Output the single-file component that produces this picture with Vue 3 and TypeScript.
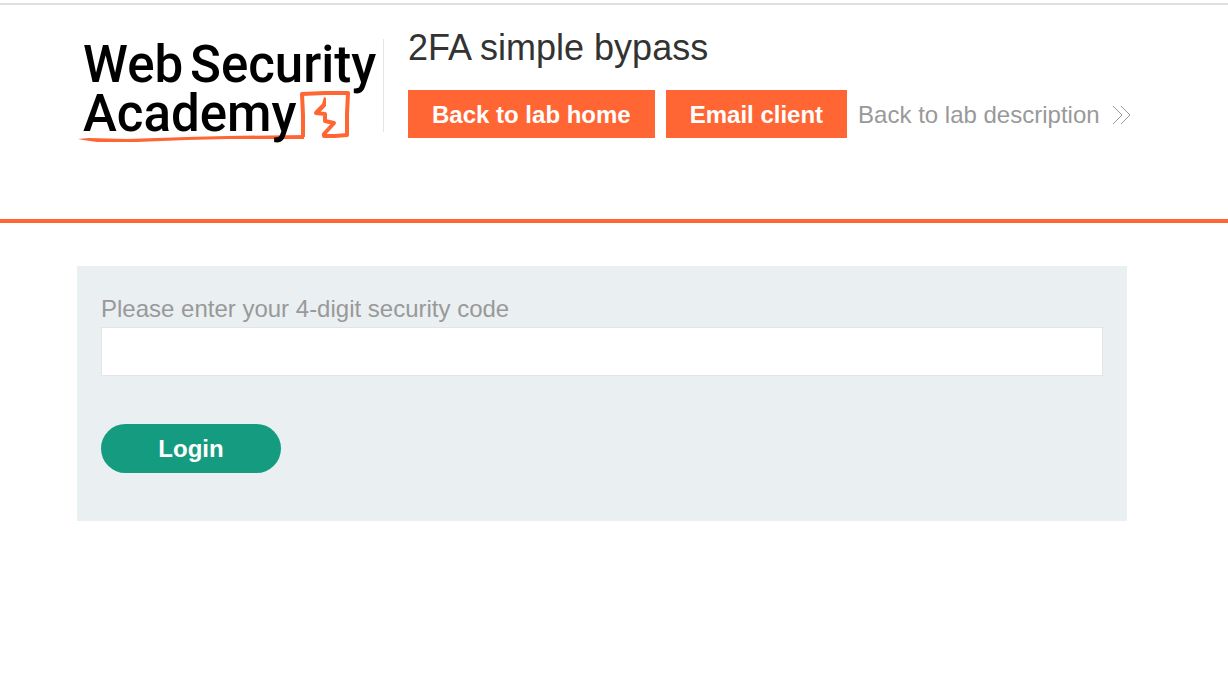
<script setup lang="ts">
import { ref } from 'vue'

const code = ref('')
</script>

<template>
  <div class="page">
    <header class="lab-header">
      <a class="logo" href="#" aria-label="Web Security Academy">
        <svg viewBox="0 0 300 106" width="300" height="106">
          <path class="logo-swash" d="M1 100 L12 99 L50 100 L110 98 L150 97 L227 96 L227 100 L150 100 L110 101 L60 103 L20 103 L6 101 Z" />
          <path class="logo-line" d="M226 98 L226 76 L225 55 L248 54 L271 54 L270 75 L270 96 L258 97 L247 97 L247 95 L257 84 L248 82 L248 75 L239 74 L246 67" />
          <path class="logo-tip" d="M247 58 L249 59 L249 67 L242 74 L238 72 L245 65 Z" />
          <g class="logo-text">
            <text x="6" y="43">Web</text>
            <text x="113" y="43">Security</text>
            <text x="6" y="92">Academy</text>
          </g>
        </svg>
      </a>
      <div class="title-area">
        <h1>2FA simple bypass</h1>
        <nav class="actions">
          <a class="action" href="#">Back to lab home</a>
          <a class="action" href="#">Email client</a>
          <a class="description" href="#">
            Back to lab description
            <svg viewBox="0 0 20 20" width="20" height="20" aria-hidden="true">
              <path d="M1 1 L10 10 L1 19 M9 1 L18 10 L9 19" />
            </svg>
          </a>
        </nav>
      </div>
    </header>
    <main>
      <form class="panel" @submit.prevent>
        <label for="code">Please enter your 4-digit security code</label>
        <input id="code" v-model="code" type="text" autocomplete="off" />
        <button type="submit">Login</button>
      </form>
    </main>
  </div>
</template>

<style>
body {
  background: #fff;
}
</style>

<style scoped>
.page {
  margin-top: 3px;
  border-top: 2px solid #e0e0e0;
  font-family: "Liberation Sans", Arial, sans-serif;
  font-size: 24px;
  line-height: 28px;
  color: #999;
}
.lab-header {
  display: flex;
  align-items: flex-start;
  padding: 22px 77px 81px;
  border-bottom: 4px solid #ff6633;
}
.logo {
  flex: none;
  margin-top: 12px;
  padding-right: 6px;
  height: 93px;
  border-right: 1px solid #e4e4e4;
}
.logo svg {
  display: block;
  overflow: visible;
}
.logo-text {
  font-family: Roboto, sans-serif;
  font-weight: 500;
  font-size: 51px;
  fill: #000;
}
.logo-swash,
.logo-tip {
  fill: #ff6633;
}
.logo-line {
  fill: none;
  stroke: #ff6633;
  stroke-width: 4;
  stroke-linejoin: round;
}
.title-area {
  margin-left: 24px;
}
h1 {
  margin: 0 0 21px;
  font-size: 36px;
  line-height: 42px;
  font-weight: 400;
  color: #333332;
}
.actions {
  display: flex;
  gap: 11px;
  line-height: 46px;
  white-space: nowrap;
}
.action {
  padding: 2px 24px 0;
  background: #ff6633;
  color: #fff;
  font-weight: 700;
  text-decoration: none;
}
.description {
  display: flex;
  align-items: center;
  gap: 12px;
  padding-top: 2px;
  color: #999;
  text-decoration: none;
}
.description path {
  fill: none;
  stroke: #999;
  stroke-width: 1;
}
main {
  padding: 43px 101px 43px 77px;
}
.panel {
  display: flex;
  flex-direction: column;
  align-items: flex-start;
  padding: 29px 24px 48px;
  background: #eaeff2;
}
label {
  margin-bottom: 4px;
}
input {
  box-sizing: border-box;
  width: 100%;
  height: 49px;
  padding: 0 12px;
  border: 1px solid #e4e4e4;
  border-radius: 0;
  background: #fff;
  color: #333332;
  font: inherit;
}
button {
  width: 180px;
  height: 49px;
  margin-top: 48px;
  border: 0;
  border-radius: 25px;
  background: #159c80;
  color: #fff;
  font: inherit;
  font-weight: 700;
}
</style>
